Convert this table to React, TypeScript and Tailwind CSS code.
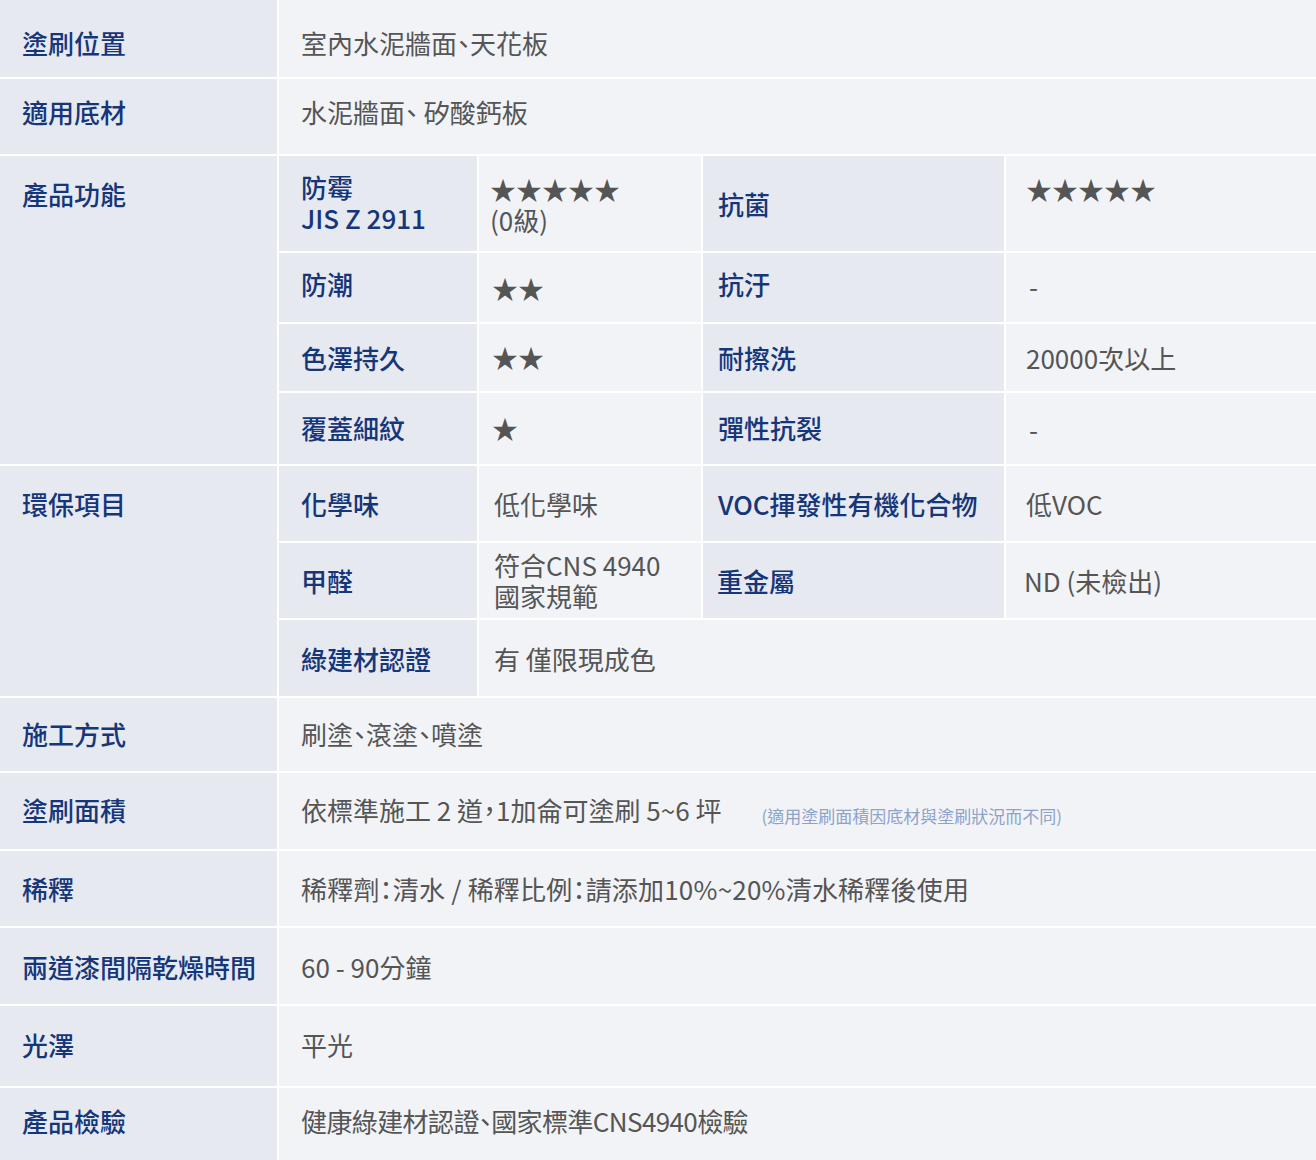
import React from 'react';

const LABEL = "bg-[#e6e9f0] text-[#16367a] font-medium";
const VALUE = "bg-[#f1f3f7] text-[#555555] [font-feature-settings:'halt']";

interface RowProps {
  label: string;
  h: string;
  pt: string;
  children: React.ReactNode;
}

// simple two-column row
const Row: React.FC<RowProps> = ({ label, h, pt, children }) => (
  <div className={`grid grid-cols-[277px_1fr] gap-x-[2px] ${h}`}>
    <div className={`${LABEL} pl-[22px] leading-[38px] ${pt}`}>{label}</div>
    <div className={`${VALUE} pl-[22px] leading-[38px] ${pt}`}>{children}</div>
  </div>
);

const Stars = ({ n }: { n: number }) => <span>{'★'.repeat(n)}</span>;

const L2 = ({ children, pl = 'pl-[22px]', pb = '' }: { children: React.ReactNode; pl?: string; pb?: string }) => (
  <div className={`${LABEL} ${pl} ${pb} flex items-center leading-[31px]`}>
    <div>{children}</div>
  </div>
);

const V2 = ({ children, pl = 'pl-[14px]', pb = '', span = '' }: { children: React.ReactNode; pl?: string; pb?: string; span?: string }) => (
  <div className={`${VALUE} ${pl} ${pb} ${span} flex items-center leading-[31px]`}>
    <div>{children}</div>
  </div>
);

export default function App() {
  return (
    <div className="w-[1316px] h-[1160px] overflow-hidden bg-white flex flex-col gap-[2px] text-[26px] font-['Noto_Sans_CJK_TC','Noto_Sans',sans-serif]">
      <Row label="塗刷位置" h="h-[77px]" pt="pt-[24px]">室內水泥牆面、天花板</Row>
      <Row label="適用底材" h="h-[75px]" pt="pt-[14px]">水泥牆面、 矽酸鈣板</Row>

      {/* 產品功能 */}
      <div className="grid grid-cols-[277px_1fr] gap-x-[2px] h-[308px]">
        <div className={`${LABEL} pl-[22px] leading-[38px] pt-[19px]`}>產品功能</div>
        <div className="grid grid-cols-[198px_222px_301px_1fr] grid-rows-[95px_69px_67px_71px] gap-[2px]">
          <L2 pb="pb-[3px]">
            防霉
            <br />
            JIS Z 2911
          </L2>
          <V2 pl="pl-[11px]">
            <Stars n={5} />
            <br />
            (0級)
          </V2>
          <L2 pl="pl-[15px]">抗菌</L2>
          <V2 pl="pl-[20px]">
            <Stars n={5} />
            <br />
            <span className="invisible">-</span>
          </V2>

          <L2 pb="pb-[9px]">防潮</L2>
          <V2 pl="pl-[13px]">
            <Stars n={2} />
          </V2>
          <L2 pl="pl-[15px]" pb="pb-[9px]">抗汙</L2>
          <V2 pl="pl-[23px]" pb="pb-[5px]">-</V2>

          <L2>色澤持久</L2>
          <V2 pl="pl-[13px]" pb="pb-[3px]">
            <Stars n={2} />
          </V2>
          <L2 pl="pl-[15px]">耐擦洗</L2>
          <V2 pl="pl-[20px]">20000次以上</V2>

          <L2 pb="pb-[3px]">覆蓋細紋</L2>
          <V2 pl="pl-[13px]" pb="pb-[3px]">
            <Stars n={1} />
          </V2>
          <L2 pl="pl-[15px]" pb="pb-[3px]">彈性抗裂</L2>
          <V2 pl="pl-[23px]">-</V2>
        </div>
      </div>

      {/* 環保項目 */}
      <div className="grid grid-cols-[277px_1fr] gap-x-[2px] h-[230px]">
        <div className={`${LABEL} pl-[22px] leading-[38px] pt-[19px]`}>環保項目</div>
        <div className="grid grid-cols-[198px_222px_301px_1fr] grid-rows-[75px_75px_76px] gap-[2px]">
          <L2>化學味</L2>
          <V2 pl="pl-[15px]">低化學味</V2>
          <L2 pl="pl-[15px]">VOC揮發性有機化合物</L2>
          <V2 pl="pl-[20px]">低VOC</V2>

          <L2>甲醛</L2>
          <V2 pl="pl-[15px]" pb="pb-[2px]">
            符合CNS 4940
            <br />
            國家規範
          </V2>
          <L2 pl="pl-[14px]">重金屬</L2>
          <V2 pl="pl-[18px]">ND (未檢出)</V2>

          <L2>綠建材認證</L2>
          <V2 pl="pl-[15px]" span="col-span-3">
            有 僅限現成色
          </V2>
        </div>
      </div>

      <Row label="施工方式" h="h-[73px]" pt="pt-[17px]">刷塗、滾塗、噴塗</Row>
      <Row label="塗刷面積" h="h-[76px]" pt="pt-[18px]">
        依標準施工 2 道，1加侖可塗刷 5~6 坪
        <span className="ml-[40px] text-[17px] text-[#8fa2c8] relative top-[2px]">(適用塗刷面積因底材與塗刷狀況而不同)</span>
      </Row>
      <Row label="稀釋" h="h-[75px]" pt="pt-[19px]">
        <span className="tracking-[0.2px]">稀釋劑：清水 / 稀釋比例：請添加10%~20%清水稀釋後使用</span>
      </Row>
      <Row label="兩道漆間隔乾燥時間" h="h-[76px]" pt="pt-[20px]">60 - 90分鐘</Row>
      <Row label="光澤" h="h-[80px]" pt="pt-[20px]">平光</Row>
      <Row label="產品檢驗" h="h-[72px]" pt="pt-[14px]">
        <span className="tracking-[-0.6px]">健康綠建材認證、國家標準CNS4940檢驗</span>
      </Row>
    </div>
  );
}
